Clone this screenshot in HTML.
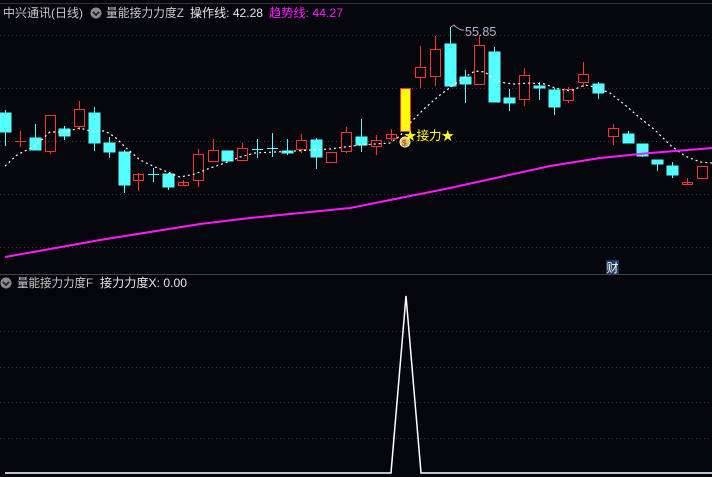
<!DOCTYPE html>
<html><head><meta charset="utf-8"><style>
html,body{margin:0;padding:0;background:#05050c;width:712px;height:477px;overflow:hidden}
svg{display:block}
text{font-family:"Liberation Sans","Noto Sans CJK SC",sans-serif}
</style></head><body>
<svg width="712" height="477" viewBox="0 0 712 477" xmlns="http://www.w3.org/2000/svg" shape-rendering="crispEdges">
<line x1="0" y1="3.5" x2="712" y2="3.5" stroke="#333" stroke-width="1"/>
<g stroke="#3a3a3a" stroke-dasharray="1,3" stroke-width="1">
<line x1="0" y1="35.5" x2="712" y2="35.5"/><line x1="0" y1="88.5" x2="712" y2="88.5"/>
<line x1="0" y1="141.5" x2="712" y2="141.5"/><line x1="0" y1="194.5" x2="712" y2="194.5"/>
<line x1="0" y1="247.5" x2="712" y2="247.5"/>
<line x1="0" y1="331.5" x2="712" y2="331.5"/><line x1="0" y1="367.5" x2="712" y2="367.5"/>
<line x1="0" y1="402.5" x2="712" y2="402.5"/><line x1="0" y1="438.5" x2="712" y2="438.5"/>
</g>
<line x1="0" y1="274.5" x2="712" y2="274.5" stroke="#444" stroke-width="1"/>
<text x="3" y="17" font-size="12" fill="#c8c8c8" textLength="80" lengthAdjust="spacingAndGlyphs">中兴通讯(日线)</text>
<circle cx="96" cy="13" r="5.5" fill="#8a8a8a"/><path d="M93 12l3 3 3-3" stroke="#222" stroke-width="1.5" fill="none"/>
<text x="106" y="17" font-size="12" fill="#c8c8c8" textLength="78" lengthAdjust="spacingAndGlyphs">量能接力力度Z</text>
<text x="190" y="17" font-size="12" fill="#e8e8e8" textLength="73" lengthAdjust="spacingAndGlyphs">操作线: 42.28</text>
<text x="269" y="17" font-size="12" fill="#ff1aff" textLength="74" lengthAdjust="spacingAndGlyphs">趋势线: 44.27</text>
<circle cx="6" cy="283" r="5.5" fill="#8a8a8a"/><path d="M3 282l3 3 3-3" stroke="#222" stroke-width="1.5" fill="none"/>
<text x="17" y="287" font-size="12" fill="#c8c8c8" textLength="76" lengthAdjust="spacingAndGlyphs">量能接力力度F</text>
<text x="100" y="287" font-size="12" fill="#e8e8e8" textLength="87" lengthAdjust="spacingAndGlyphs">接力力度X: 0.00</text>
<g stroke-width="1" shape-rendering="crispEdges">
<g fill="#54ffff" stroke="#54ffff">
<line x1="5.5" y1="110" x2="5.5" y2="146"/><rect x="0" y="113" width="11" height="19"/>
<line x1="35.5" y1="124" x2="35.5" y2="150"/><rect x="30" y="138" width="11" height="12"/>
<line x1="64.5" y1="126" x2="64.5" y2="140"/><rect x="59" y="129" width="11" height="7"/>
<line x1="94.5" y1="107" x2="94.5" y2="151"/><rect x="89" y="113" width="11" height="30"/>
<line x1="109.5" y1="137" x2="109.5" y2="158"/><rect x="104" y="143" width="11" height="9"/>
<line x1="124.5" y1="150" x2="124.5" y2="193"/><rect x="119" y="152" width="11" height="33"/>
<line x1="153.5" y1="168" x2="153.5" y2="182"/><line x1="148" y1="174.5" x2="159" y2="174.5"/>
<line x1="168.5" y1="173" x2="168.5" y2="190"/><rect x="163" y="174" width="11" height="13"/>
<rect x="222" y="151" width="11" height="10"/>
<line x1="257.5" y1="139" x2="257.5" y2="158"/><line x1="252" y1="149.5" x2="263" y2="149.5"/>
<line x1="272.5" y1="133" x2="272.5" y2="157"/><line x1="267" y1="148.5" x2="278" y2="148.5"/>
<line x1="287.5" y1="139" x2="287.5" y2="155"/><rect x="282" y="151" width="11" height="2"/>
<line x1="316.5" y1="138" x2="316.5" y2="169"/><rect x="311" y="140" width="11" height="17"/>
<line x1="361.5" y1="119" x2="361.5" y2="152"/><rect x="356" y="137" width="11" height="8"/>
<line x1="450.5" y1="27" x2="450.5" y2="87"/><rect x="445" y="44" width="11" height="42"/>
<line x1="465.5" y1="70" x2="465.5" y2="103"/><rect x="460" y="77" width="11" height="7"/>
<line x1="494.5" y1="47" x2="494.5" y2="102"/><rect x="489" y="52" width="11" height="50"/>
<line x1="509.5" y1="89" x2="509.5" y2="111"/><rect x="504" y="98" width="11" height="5"/>
<line x1="539.5" y1="82" x2="539.5" y2="100"/><rect x="534" y="86" width="11" height="2"/>
<line x1="554.5" y1="88" x2="554.5" y2="115"/><rect x="549" y="90" width="11" height="17"/>
<line x1="598.5" y1="82" x2="598.5" y2="99"/><rect x="593" y="84" width="11" height="9"/>
<line x1="628.5" y1="131" x2="628.5" y2="143"/><rect x="623" y="134" width="11" height="9"/>
<line x1="642.5" y1="144" x2="642.5" y2="157"/><rect x="637" y="144" width="11" height="12"/>
<line x1="657.5" y1="160" x2="657.5" y2="171"/><rect x="652" y="160" width="11" height="4"/>
<line x1="672.5" y1="162" x2="672.5" y2="178"/><rect x="667" y="166" width="11" height="9"/>
</g>
<g fill="none" stroke="#ff3232">
<line x1="20.5" y1="131" x2="20.5" y2="147"/><line x1="15" y1="141.5" x2="26" y2="141.5"/>
<line x1="50.5" y1="152" x2="50.5" y2="154"/><rect x="45.5" y="115.5" width="10" height="36"/>
<line x1="79.5" y1="101" x2="79.5" y2="109"/><line x1="79.5" y1="127" x2="79.5" y2="130"/><rect x="74.5" y="109.5" width="10" height="17"/>
<line x1="138.5" y1="173" x2="138.5" y2="191"/><rect x="133.5" y="174.5" width="10" height="6"/>
<line x1="183.5" y1="180" x2="183.5" y2="186"/><rect x="178.5" y="182.5" width="10" height="3"/>
<line x1="198.5" y1="149" x2="198.5" y2="187"/><rect x="193.5" y="154.5" width="10" height="26" fill="#05050c"/>
<line x1="213.5" y1="139" x2="213.5" y2="150"/><rect x="208.5" y="150.5" width="10" height="11"/>
<line x1="242.5" y1="143" x2="242.5" y2="148"/><rect x="237.5" y="148.5" width="10" height="12"/>
<line x1="301.5" y1="134" x2="301.5" y2="153"/><rect x="296.5" y="140.5" width="10" height="9" fill="#05050c"/>
<rect x="326.5" y="152.5" width="10" height="10"/>
<line x1="346.5" y1="127" x2="346.5" y2="153"/><rect x="341.5" y="132.5" width="10" height="19" fill="#05050c"/>
<line x1="376.5" y1="135" x2="376.5" y2="155"/><rect x="371.5" y="140.5" width="10" height="6" fill="#05050c"/>
<line x1="391.5" y1="129" x2="391.5" y2="141"/><rect x="386.5" y="134.5" width="10" height="4"/>
<line x1="420.5" y1="46" x2="420.5" y2="88"/><rect x="415.5" y="67.5" width="10" height="10" fill="#05050c"/>
<line x1="435.5" y1="36" x2="435.5" y2="86"/><rect x="430.5" y="49.5" width="10" height="27" fill="#05050c"/>
<line x1="479.5" y1="35" x2="479.5" y2="45"/><rect x="474.5" y="45.5" width="10" height="39" fill="#05050c"/>
<line x1="524.5" y1="68" x2="524.5" y2="106"/><rect x="519.5" y="75.5" width="10" height="24" fill="#05050c"/>
<line x1="568.5" y1="87" x2="568.5" y2="103"/><rect x="563.5" y="89.5" width="10" height="11" fill="#05050c"/>
<line x1="583.5" y1="62" x2="583.5" y2="87"/><rect x="578.5" y="74.5" width="10" height="8" fill="#05050c"/>
<line x1="613.5" y1="124" x2="613.5" y2="145"/><rect x="608.5" y="128.5" width="10" height="8" fill="#05050c"/>
<line x1="687.5" y1="178" x2="687.5" y2="185"/><rect x="682.5" y="182.5" width="10" height="2"/>
<rect x="697.5" y="166.5" width="10" height="12"/>
</g>
<rect x="400.5" y="88.5" width="10" height="43" fill="#ffff00" stroke="#ff3232"/>
</g>
<polyline shape-rendering="auto" fill="none" stroke="#ffffff" stroke-width="1.2" stroke-dasharray="2,3" points="5,166 17,155 35,146 50,132 64,132 80,128 90,131 105,131 115,137 125,147 140,160 155,167 170,173 180,177 195,174 210,168 225,163 240,157 255,153 275,152 295,151 310,150 330,149 345,147 360,145 375,144 390,143 400,136 410,123 425,108 440,95 455,84 465,77 475,71 485,72 495,80 505,83 515,84 530,83 545,84 555,88 570,91 585,85 595,87 610,93 625,105 640,118 655,130 670,145 685,156 700,162 712,163"/>
<polyline shape-rendering="auto" fill="none" stroke="#ff1aff" stroke-width="2" points="5,257 50,249 100,240 150,232 200,224 250,218 300,213 350,208 400,198 450,188 500,177 550,166 600,158 650,153 700,149 712,148"/>
<path d="M451 27 L454 25 L456 27 L461 30 L464 30" stroke="#aaa" fill="none" stroke-width="1" shape-rendering="auto"/>
<text x="465" y="36" font-size="12.5" fill="#aeb8c8">55.85</text>
<circle cx="405" cy="142" r="5" fill="#e8c060" stroke="#fff8d0"/>
<text x="402" y="146" font-size="8" fill="#7a4a10">$</text>
<text x="404" y="140" font-size="12.5" fill="#ffff22">★接力★</text>
<rect x="606" y="260" width="13" height="14" fill="#1c3a64"/>
<text x="606.5" y="272" font-size="12" fill="#ffffff">财</text>
<polyline shape-rendering="auto" fill="none" stroke="#ffffff" stroke-width="1.5" points="5,473 391,473 406,296 421,473 712,473"/>
</svg>
</body></html>
